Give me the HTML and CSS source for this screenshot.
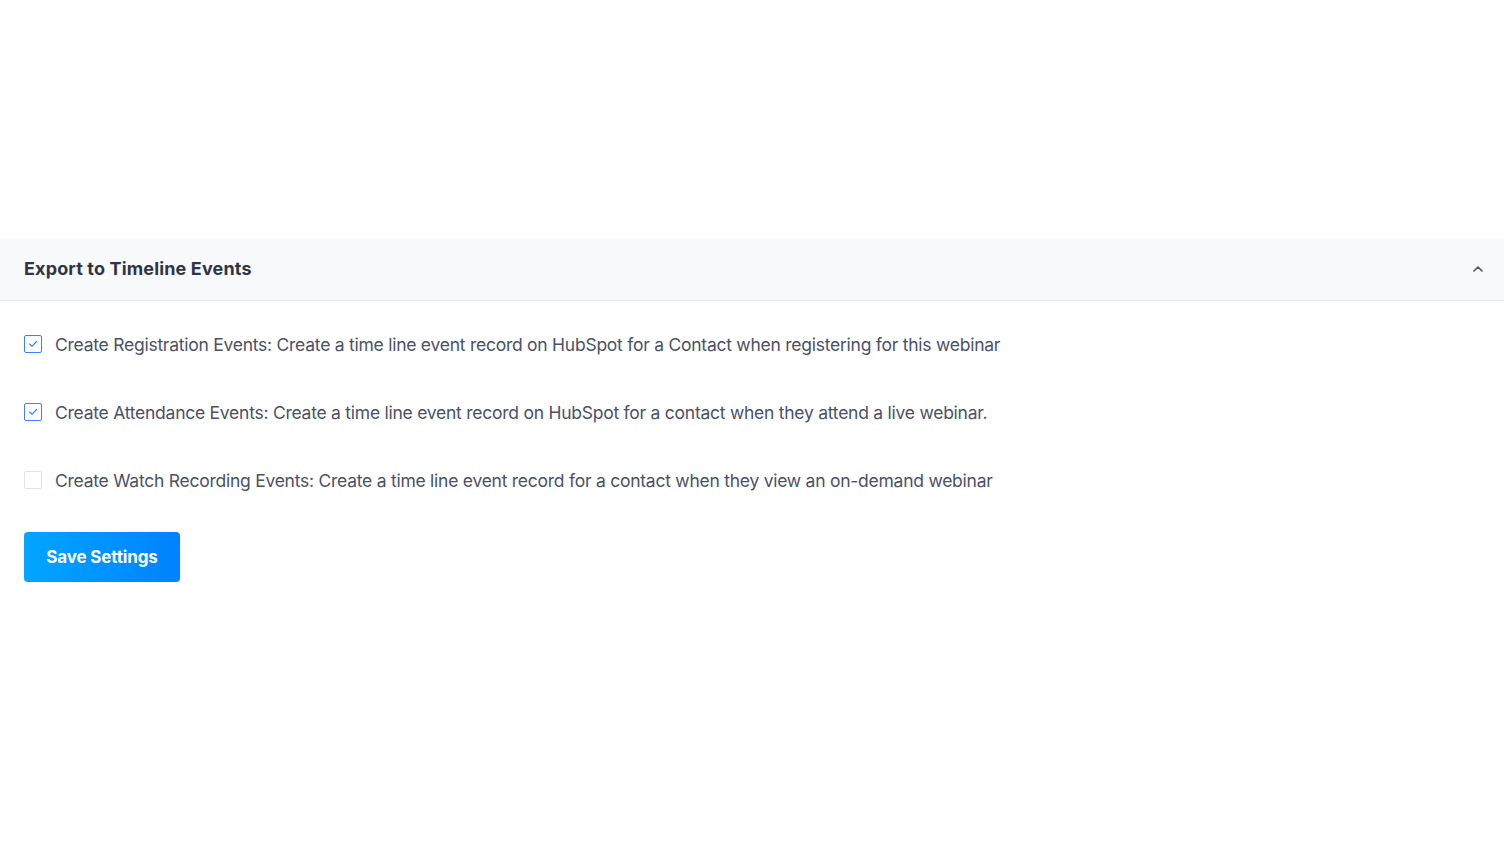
FILE: index.html
```html
<!DOCTYPE html>
<html>
<head>
<meta charset="utf-8">
<link rel="stylesheet" href="styles.css">
</head>
<body>
<div class="page">
  <section class="panel">
    <div class="panel-head">
      <h2 class="panel-title">Export to Timeline Events</h2>
      <svg class="chevron" width="12" height="8" viewBox="0 0 12 8"><path d="M2 6 L6 2 L10 6" fill="none" stroke="#4a5268" stroke-width="1.6" stroke-linecap="round" stroke-linejoin="round"/></svg>
    </div>
    <div class="panel-body">
      <div class="opt-list">
        <label class="opt">
          <span class="box checked"><svg width="10" height="8" viewBox="0 0 10 8"><path d="M1.5 4 L4 6.3 L8.5 1.5" fill="none" stroke="#3b82f6" stroke-width="1.2" stroke-linecap="round" stroke-linejoin="round"/></svg></span>
          <span class="opt-text">Create Registration Events: Create a time line event record on HubSpot for a Contact when registering for this webinar</span>
        </label>
        <label class="opt">
          <span class="box checked"><svg width="10" height="8" viewBox="0 0 10 8"><path d="M1.5 4 L4 6.3 L8.5 1.5" fill="none" stroke="#3b82f6" stroke-width="1.2" stroke-linecap="round" stroke-linejoin="round"/></svg></span>
          <span class="opt-text">Create Attendance Events: Create a time line event record on HubSpot for a contact when they attend a live webinar.</span>
        </label>
        <label class="opt">
          <span class="box"></span>
          <span class="opt-text">Create Watch Recording Events: Create a time line event record for a contact when they view an on-demand webinar</span>
        </label>
      </div>
      <button class="save">Save Settings</button>
    </div>
  </section>
</div>
</body>
</html>
```
FILE: styles.css
```css
html, body {
  margin: 0;
  padding: 0;
  background: #ffffff;
  font-family: Inter, "Open Sans", sans-serif;
}
.page {
  padding-top: 239px;
}
.panel-head {
  height: 62px;
  box-sizing: border-box;
  background: #f8f9fb;
  border-bottom: 1px solid #e4e8ee;
  display: flex;
  align-items: center;
  justify-content: space-between;
  padding: 0 20px 3px 24px;
}
.panel-title {
  margin: 0;
  font-size: 18px;
  font-weight: 700;
  color: #2f3547;
  letter-spacing: 0.15px;
}
.chevron {
  display: block;
  margin-top: 2px;
}
.panel-body {
  padding: 32px 24px 0 24px;
  display: flex;
  flex-direction: column;
  align-items: flex-start;
}
.opt-list {
  display: flex;
  flex-direction: column;
  gap: 46px;
}
.opt {
  display: flex;
  align-items: center;
  gap: 13px;
  height: 22px;
}
.box {
  width: 16px;
  height: 16px;
  border: 1px solid #dfe2e8;
  border-radius: 2px;
  display: flex;
  align-items: center;
  justify-content: center;
  background: #fff;
}
.box.checked {
  border-color: #3b82f6;
}
.opt-text {
  font-size: 17.5px;
  color: #4b5166;
  letter-spacing: -0.25px;
  white-space: nowrap;
}
.save {
  margin-top: 41px;
  width: 156px;
  height: 50px;
  border: none;
  border-radius: 4px;
  background: linear-gradient(90deg, #00a6ff 0%, #0082ff 100%);
  color: #fff;
  font-family: Inter, sans-serif;
  font-weight: 700;
  font-size: 17px;
  letter-spacing: -0.15px;
  padding: 0;
}
```
